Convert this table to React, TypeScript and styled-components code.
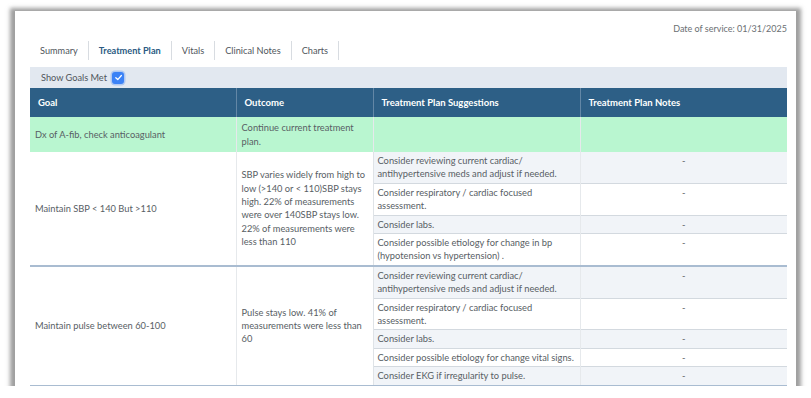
import React from "react";
import styled, { createGlobalStyle } from "styled-components";

const Global = createGlobalStyle`
  html, body { margin: 0; padding: 0; background: #ffffff; }
  body { font-family: Lato, "Open Sans", sans-serif; }
`;

const Frame = styled.div`
  box-sizing: border-box;
  margin: 11px 0 0 15px;
  width: 781px;
  height: 375px;
  background: #ffffff;
  box-shadow: 0 2px 4px 5px rgba(95, 95, 95, 0.6);
  overflow: hidden;
  padding: 0 9px 0 15px;
`;

const DateRow = styled.div`
  display: flex;
  justify-content: flex-end;
  padding-top: 12px;
  height: 12px;
  font-size: 9px;
  line-height: 12px;
  color: #6b6f73;
`;

const Tabs = styled.div`
  display: flex;
  align-items: stretch;
  margin-top: 6px;
  height: 19px;
`;

const Tab = styled.div<{ $active?: boolean }>`
  display: flex;
  align-items: center;
  padding: 0 10px;
  border-right: 1px solid #d8dce1;
  font-size: 9.2px;
  font-weight: ${(p) => (p.$active ? 700 : 400)};
  color: ${(p) => (p.$active ? "#2b5a82" : "#50565c")};
`;

const GoalsBar = styled.div`
  display: flex;
  align-items: center;
  gap: 5px;
  margin-top: 7px;
  height: 21px;
  padding-left: 11px;
  background: #e2e8f0;
  font-size: 9.2px;
  color: #4f555b;
`;

const Check = styled.span`
  display: inline-flex;
  width: 12px;
  height: 12px;
  border-radius: 3px;
  background: #3b82f6;
  box-shadow: 0 0 0 1.5px rgba(59, 130, 246, 0.3);
  align-items: center;
  justify-content: center;
`;

const Table = styled.table`
  width: 757px;
  border-collapse: collapse;
  table-layout: fixed;
  font-size: 9.3px;
  line-height: 13.4px;
  color: #585e64;
`;

const Th = styled.th`
  background: #2d5f86;
  color: #ffffff;
  font-size: 9.5px;
  font-weight: 700;
  text-align: left;
  height: 29px;
  padding: 0 8px;
  border-left: 1px solid #6387a6;
  &:first-child { border-left: none; }
`;

const GreenRow = styled.tr`
  background: #b9f6d0;
  height: 35px;
`;

const GroupRow = styled.tr<{ $last?: boolean }>`
  border-bottom: ${(p) => (p.$last ? "2px solid #a9bcd1" : "1px solid #d3d9df")};
`;

const Cell = styled.td`
  padding: 0 4px 0 5px;
  vertical-align: middle;
  border-left: 1px solid #e6e9ec;
  &:first-child { border-left: none; }
`;

const SpanCell = styled.td`
  padding: 0 4px 0 5px;
  vertical-align: middle;
  background: #ffffff;
  border-left: 1px solid #e6e9ec;
  border-bottom: 2px solid #a9bcd1;
  &:first-child { border-left: none; }
`;

const SugCell = styled.td<{ $shade?: boolean }>`
  padding: 2px 3px 2px 4px;
  vertical-align: top;
  background: ${(p) => (p.$shade ? "#f1f4f8" : "#ffffff")};
  border-left: 1px solid #dfe3e7;
`;

const NoteCell = styled.td<{ $shade?: boolean }>`
  padding: 2px 4px;
  vertical-align: top;
  text-align: center;
  background: ${(p) => (p.$shade ? "#f1f4f8" : "#ffffff")};
  border-left: 1px solid #e6e9ec;
`;

type Group = { goal: string; outcome: string; suggestions: string[] };

const groups: Group[] = [
  {
    goal: "Maintain SBP < 140 But >110",
    outcome:
      "SBP varies widely from high to low (>140 or < 110)SBP stays high. 22% of measurements were over 140SBP stays low. 22% of measurements were less than 110",
    suggestions: [
      "Consider reviewing current cardiac/ antihypertensive meds and adjust if needed.",
      "Consider respiratory / cardiac focused assessment.",
      "Consider labs.",
      "Consider possible etiology for change in bp (hypotension vs hypertension) .",
    ],
  },
  {
    goal: "Maintain pulse between 60-100",
    outcome: "Pulse stays low. 41% of measurements were less than 60",
    suggestions: [
      "Consider reviewing current cardiac/ antihypertensive meds and adjust if needed.",
      "Consider respiratory / cardiac focused assessment.",
      "Consider labs.",
      "Consider possible etiology for change vital signs.",
      "Consider EKG if irregularity to pulse.",
    ],
  },
];

export default function App() {
  return (
    <>
      <Global />
      <Frame>
        <DateRow>Date of service: 01/31/2025</DateRow>
        <Tabs>
          <Tab>Summary</Tab>
          <Tab $active>Treatment Plan</Tab>
          <Tab>Vitals</Tab>
          <Tab>Clinical Notes</Tab>
          <Tab>Charts</Tab>
        </Tabs>
        <GoalsBar>
          Show Goals Met
          <Check>
            <svg width="9" height="9" viewBox="0 0 10 10">
              <path d="M2 5.2 L4.2 7.3 L8.2 2.8" fill="none" stroke="#fff" strokeWidth="1.4" strokeLinecap="round" strokeLinejoin="round" />
            </svg>
          </Check>
        </GoalsBar>
        <Table>
          <colgroup>
            <col style={{ width: 206 }} />
            <col style={{ width: 137 }} />
            <col style={{ width: 207 }} />
            <col style={{ width: 207 }} />
          </colgroup>
          <thead>
            <tr>
              <Th>Goal</Th>
              <Th>Outcome</Th>
              <Th>Treatment Plan Suggestions</Th>
              <Th>Treatment Plan Notes</Th>
            </tr>
          </thead>
          <tbody>
            <GreenRow>
              <Cell>Dx of A-fib, check anticoagulant</Cell>
              <Cell>Continue current treatment plan.</Cell>
              <Cell></Cell>
              <Cell></Cell>
            </GreenRow>
            {groups.map((g) =>
              g.suggestions.map((s, i) => (
                <GroupRow key={g.goal + i} $last={i === g.suggestions.length - 1}>
                  {i === 0 && (
                    <>
                      <SpanCell rowSpan={g.suggestions.length}>{g.goal}</SpanCell>
                      <SpanCell rowSpan={g.suggestions.length}>{g.outcome}</SpanCell>
                    </>
                  )}
                  <SugCell $shade={i % 2 === 0}>{s}</SugCell>
                  <NoteCell $shade={i % 2 === 0}>-</NoteCell>
                </GroupRow>
              ))
            )}
          </tbody>
        </Table>
      </Frame>
    </>
  );
}
